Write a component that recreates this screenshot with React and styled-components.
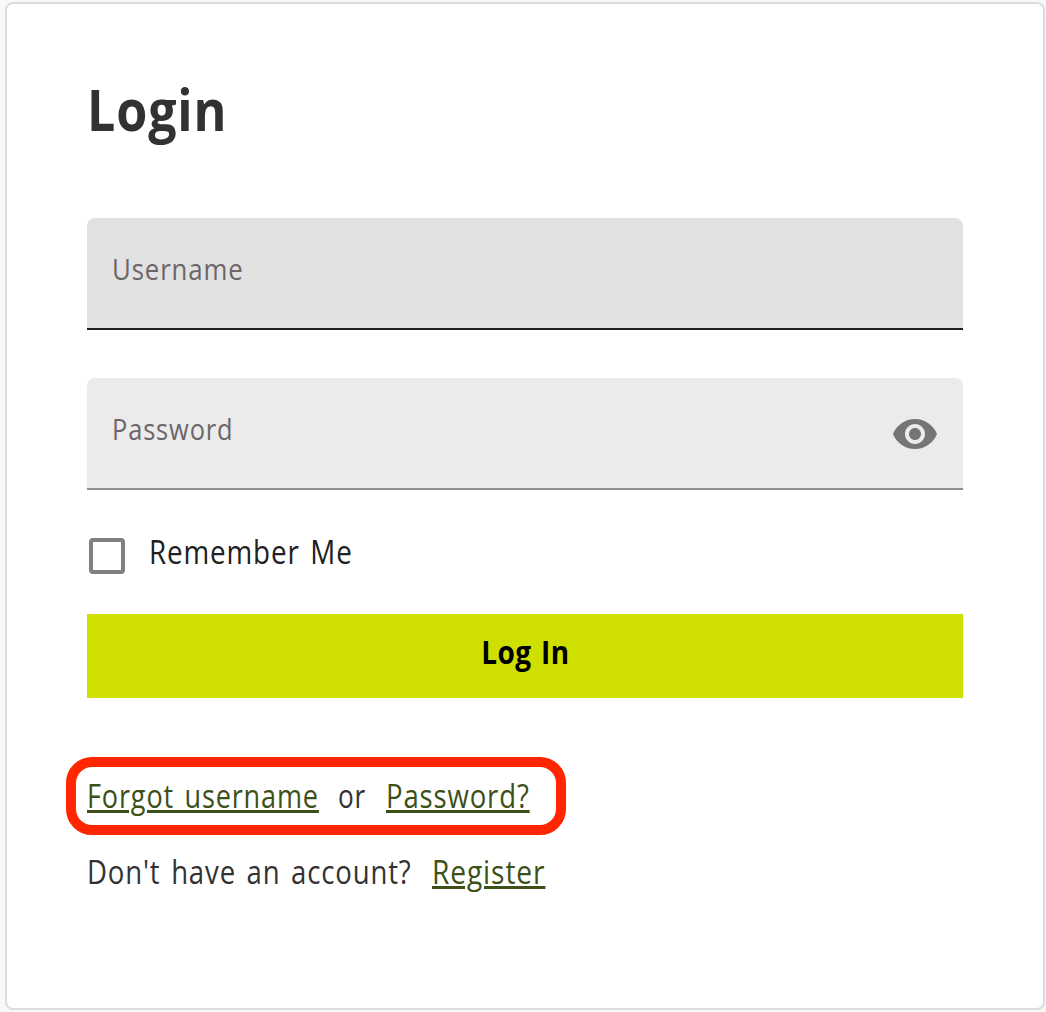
import React from "react";
import styled, { createGlobalStyle } from "styled-components";

const GlobalStyle = createGlobalStyle`
  * {
    box-sizing: border-box;
  }
  body {
    margin: 0;
    background: #f8f8f8;
    font-family: "Open Sans", "Liberation Sans", sans-serif;
    letter-spacing: 1px;
  }
`;

const Page = styled.main`
  height: 1012px;
  padding: 2px 1px 2px 5px;
`;

const Card = styled.form`
  height: 1008px;
  padding: 72px 80px 0;
  background: white;
  border: 2px solid #dcdcdc;
  border-radius: 8px;
`;

const Narrow = styled.span`
  display: inline-block;
  white-space: nowrap;
  transform: scaleX(${(props) => props.$scale || 0.86});
  transform-origin: ${(props) => props.$origin || "left"};
`;

const Title = styled.h1`
  height: 66px;
  margin: 0 0 76px;
  color: #323232;
  font-size: 58px;
  font-weight: 700;
  line-height: 65px;
`;

const Label = styled.span`
  display: block;
  width: ${(props) => props.$width}px;
  white-space: nowrap;
`;

const Field = styled.label`
  display: flex;
  align-items: center;
  justify-content: space-between;
  height: 112px;
  margin-bottom: 48px;
  padding: 0 24px 10px 25px;
  color: #6b6667;
  background: ${(props) => (props.$hover ? "#e1e1e1" : "#ebebeb")};
  border-bottom: 2px solid ${(props) => (props.$hover ? "#1f1f1f" : "#8f8f8f")};
  border-radius: 8px 8px 0 0;
  font-size: 30px;
`;

const EyeIcon = styled.svg`
  width: 48px;
  height: 48px;
  margin-top: 12px;
  fill: #757575;
`;

const Remember = styled.label`
  display: flex;
  align-items: center;
  gap: 24px;
  height: 36px;
  padding-left: 2px;
  color: #212121;
  font-size: 32px;
  word-spacing: 3px;
`;

const RememberText = styled.span`
  padding-bottom: 9px;
`;

const Checkbox = styled.span`
  width: 36px;
  height: 36px;
  border: 4px solid #808080;
  border-radius: 4px;
`;

const Button = styled.button`
  display: block;
  width: 100%;
  height: 84px;
  margin: 40px 0 59px;
  padding: 0 0 10px;
  color: black;
  background: #cfe000;
  border: 0;
  font-family: inherit;
  font-size: 32px;
  font-weight: 700;
  letter-spacing: 0.5px;
  word-spacing: 2px;
`;

const Recovery = styled.div`
  display: flex;
  align-items: center;
  width: 500px;
  height: 78px;
  margin-left: -21px;
  padding: 0 0 2px 11px;
  border: 10px solid #ff2600;
  border-radius: 26px;
  color: #323232;
  font-size: 32px;
  word-spacing: 3px;
`;

const Register = styled.div`
  display: flex;
  margin-top: 15px;
  color: #323232;
  font-size: 32px;
  word-spacing: 3px;
`;

const Link = styled(Narrow).attrs({ as: "a" })`
  color: #3c5018;
  text-decoration: underline;
  text-decoration-thickness: 3px;
`;

function App() {
  return (
    <>
      <GlobalStyle />
      <Page>
        <Card>
          <Title>
            <Narrow $scale={0.865}>Login</Narrow>
          </Title>
          <Field $hover>
            <Narrow>Username</Narrow>
          </Field>
          <Field>
            <Narrow $scale={0.848}>Password</Narrow>
            <EyeIcon viewBox="0 0 24 24">
              <path d="M12 4.5C7 4.5 2.73 7.61 1 12c1.73 4.39 6 7.5 11 7.5s9.27-3.11 11-7.5c-1.73-4.39-6-7.5-11-7.5zM12 17c-2.76 0-5-2.24-5-5s2.24-5 5-5 5 2.24 5 5-2.24 5-5 5zm0-8c-1.66 0-3 1.34-3 3s1.34 3 3 3 3-1.34 3-3-1.34-3-3-3z" />
            </EyeIcon>
          </Field>
          <Remember>
            <Checkbox />
            <RememberText>
              <Narrow $scale={0.868}>Remember Me</Narrow>
            </RememberText>
          </Remember>
          <Button type="button">
            <Narrow $scale={0.875} $origin="center">
              Log In
            </Narrow>
          </Button>
          <Recovery>
            <Label $width={251}>
              <Link $scale={0.846}>Forgot username</Link>
            </Label>
            <Label $width={48}>
              <Narrow $scale={0.82}>or</Narrow>
            </Label>
            <Link>Password?</Link>
          </Recovery>
          <Register>
            <Label $width={345}>
              <Narrow>Don&apos;t have an account?</Narrow>
            </Label>
            <Link $scale={0.88}>Register</Link>
          </Register>
        </Card>
      </Page>
    </>
  );
}

export default App;
